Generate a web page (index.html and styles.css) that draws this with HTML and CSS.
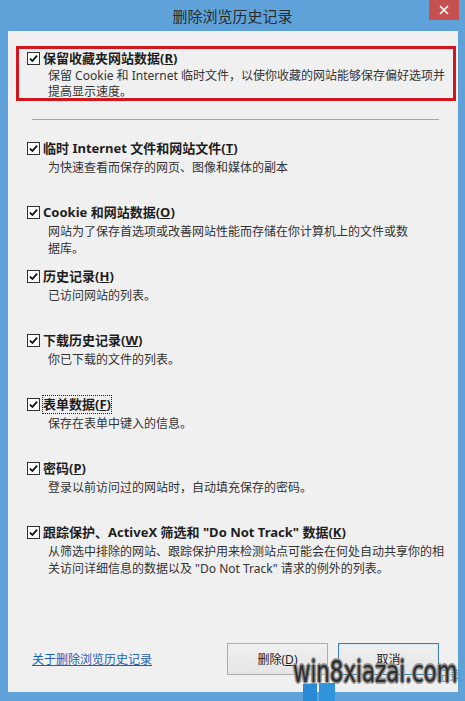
FILE: index.html
```html
<!DOCTYPE html>
<html lang="zh-CN">
<head>
    <meta charset="UTF-8">
    <meta name="viewport" content="width=device-width, initial-scale=1.0">
    <title>删除浏览历史记录</title>
    <link rel="stylesheet" href="styles.css">
</head>
<body>
    <div class="window">
        <div class="titlebar">
            <span></span>
            <h1 class="title">删除浏览历史记录</h1>
            <button class="close" aria-label="关闭">
                <svg width="10" height="10" viewBox="0 0 10 10"><path d="M1 1 L9 9 M9 1 L1 9" stroke="#fff" stroke-width="1.7" fill="none"/></svg>
            </button>
        </div>

        <div class="panel">
            <div class="option keep">
                <div class="option-head">
                    <span class="check"><svg viewBox="0 0 11 11"><path d="M2 5.6 L4.4 8 L9 2.6" /></svg></span>
                    <span class="option-title">保留收藏夹网站数据(<u>R</u>)</span>
                </div>
                <p class="option-desc">保留 Cookie 和 Internet 临时文件，以使你收藏的网站能够保存偏好选项并<br>提高显示速度。</p>
            </div>

            <hr class="divider">

            <div class="options">
                <div class="option">
                    <div class="option-head">
                        <span class="check"><svg viewBox="0 0 11 11"><path d="M2 5.6 L4.4 8 L9 2.6" /></svg></span>
                        <span class="option-title">临时 Internet 文件和网站文件(<u>T</u>)</span>
                    </div>
                    <p class="option-desc">为快速查看而保存的网页、图像和媒体的副本</p>
                </div>
                <div class="option">
                    <div class="option-head">
                        <span class="check"><svg viewBox="0 0 11 11"><path d="M2 5.6 L4.4 8 L9 2.6" /></svg></span>
                        <span class="option-title">Cookie 和网站数据(<u>O</u>)</span>
                    </div>
                    <p class="option-desc">网站为了保存首选项或改善网站性能而存储在你计算机上的文件或数<br>据库。</p>
                </div>
                <div class="option">
                    <div class="option-head">
                        <span class="check"><svg viewBox="0 0 11 11"><path d="M2 5.6 L4.4 8 L9 2.6" /></svg></span>
                        <span class="option-title">历史记录(<u>H</u>)</span>
                    </div>
                    <p class="option-desc">已访问网站的列表。</p>
                </div>
                <div class="option">
                    <div class="option-head">
                        <span class="check"><svg viewBox="0 0 11 11"><path d="M2 5.6 L4.4 8 L9 2.6" /></svg></span>
                        <span class="option-title">下载历史记录(<u>W</u>)</span>
                    </div>
                    <p class="option-desc">你已下载的文件的列表。</p>
                </div>
                <div class="option">
                    <div class="option-head">
                        <span class="check"><svg viewBox="0 0 11 11"><path d="M2 5.6 L4.4 8 L9 2.6" /></svg></span>
                        <span class="option-title focus">表单数据(<u>F</u>)</span>
                    </div>
                    <p class="option-desc">保存在表单中键入的信息。</p>
                </div>
                <div class="option">
                    <div class="option-head">
                        <span class="check"><svg viewBox="0 0 11 11"><path d="M2 5.6 L4.4 8 L9 2.6" /></svg></span>
                        <span class="option-title">密码(<u>P</u>)</span>
                    </div>
                    <p class="option-desc">登录以前访问过的网站时，自动填充保存的密码。</p>
                </div>
                <div class="option">
                    <div class="option-head">
                        <span class="check"><svg viewBox="0 0 11 11"><path d="M2 5.6 L4.4 8 L9 2.6" /></svg></span>
                        <span class="option-title">跟踪保护、ActiveX 筛选和 "Do Not Track" 数据(<u>K</u>)</span>
                    </div>
                    <p class="option-desc">从筛选中排除的网站、跟踪保护用来检测站点可能会在何处自动共享你的相<br>关访问详细信息的数据以及 "Do Not Track" 请求的例外的列表。</p>
                </div>
            </div>

            <div class="footer">
                <a href="#" class="about-link">关于删除浏览历史记录</a>
                <div class="buttons">
                    <button class="btn">删除(<u>D</u>)</button>
                    <button class="btn btn-default">取消</button>
                </div>
            </div>
        </div>

        <!-- site watermark stamped over the screenshot -->
        <div class="watermark">
            <svg class="wm-logo" width="34" height="18" viewBox="0 0 34 18">
                <polygon points="1,1 15,0 15,18 1,18" fill="#2b8ad6"/>
                <polygon points="17,0 33,-1 33,18 17,18" fill="#3195dd"/>
            </svg>
            <span class="wm-blue">记录</span>
            <span class="wm-text">win8xiazai.com</span>
        </div>
    </div>
</body>
</html>
```

FILE: styles.css
```css
:root {
    --frame: #5fa2da;
    --panel-bg: #f0f0f0;
    --text-color: #1e1e1e;
    --desc-color: #333;
    --link-color: #1f5fb5;
    --alert-red: #d3161e;
}

body {
    margin: 0;
    font-family: "Noto Sans", "Noto Sans CJK SC", sans-serif;
    background-color: var(--frame);
}

.window {
    width: 465px;
    height: 701px;
    display: flex;
    flex-direction: column;
    position: relative;
    background-color: var(--frame);
    overflow: hidden;
}

.titlebar {
    height: 31px;
    display: grid;
    grid-template-columns: 1fr auto 1fr;
}

.title {
    margin: 0;
    font-family: "Noto Sans CJK SC", sans-serif;
    font-size: 15px;
    font-weight: normal;
    line-height: 31px;
    color: #2a2a2a;
}

.close {
    justify-self: end;
    align-self: start;
    width: 30px;
    height: 20px;
    margin-right: 6px;
    padding: 0;
    border: none;
    background-color: #c75050;
    display: flex;
    align-items: center;
    justify-content: center;
}

.panel {
    flex: 1;
    margin: 0 7px 9px 8px;
    background-color: var(--panel-bg);
    display: flex;
    flex-direction: column;
}

.keep {
    margin: 15px 2px 0 8px;
    height: 55px;
    box-sizing: border-box;
    padding-left: 8px;
    border: 3px solid var(--alert-red);
}

.keep .option-desc {
    margin-top: 1px;
    line-height: 16px;
}

.divider {
    margin: 18px 19px 0 24px;
    height: 0;
    border: none;
    border-top: 1px solid #a6a6a6;
}

.options {
    margin-top: 19px;
    padding-left: 19px;
}

.options .option {
    height: 64px;
}

.option-head {
    display: flex;
    align-items: center;
    gap: 3px;
    height: 18px;
}

.check {
    width: 13px;
    height: 13px;
    box-sizing: border-box;
    border: 1px solid #333;
    background-color: #fff;
    display: flex;
}

.check svg {
    width: 11px;
    height: 11px;
}

.check path {
    fill: none;
    stroke: #111;
    stroke-width: 1.8;
}

.option-title {
    font-size: 13px;
    font-weight: bold;
    line-height: 17px;
    color: var(--text-color);
}

.option-title u {
    text-underline-offset: 1px;
}

.focus {
    outline: 1px dotted #222;
}

.option-desc {
    margin: 2px 0 0 21px;
    font-size: 12px;
    line-height: 17px;
    color: var(--desc-color);
    white-space: nowrap;
}

.footer {
    margin-top: auto;
    padding: 0 19px 17px 24px;
    display: flex;
    align-items: center;
    justify-content: space-between;
}

.about-link {
    font-size: 12px;
    color: var(--link-color);
    text-decoration: underline;
}

.buttons {
    display: flex;
    gap: 10px;
}

.btn {
    width: 101px;
    height: 32px;
    padding: 0;
    border: 1px solid #acacac;
    background: linear-gradient(#f0f0f0, #e5e5e5);
    font-family: "Noto Sans", "Noto Sans CJK SC", sans-serif;
    font-size: 12px;
    color: #222;
}

.btn-default {
    border-color: #3c7fb1;
    box-shadow: inset 0 0 0 1px #d6e7f5;
}

.watermark {
    position: absolute;
    left: 292px;
    top: 657px;
    width: 173px;
    height: 44px;
}

.wm-logo {
    position: absolute;
    left: 10px;
    top: 26px;
}

.wm-blue {
    position: absolute;
    left: 144px;
    top: 10px;
    font-family: "Noto Sans CJK SC", sans-serif;
    font-size: 13px;
    line-height: 16px;
    color: #4a98d6;
}

.wm-text {
    position: absolute;
    left: 1px;
    top: 0;
    font-family: "DejaVu Sans", sans-serif;
    font-size: 30px;
    line-height: 30px;
    color: #2e2e2e;
    white-space: nowrap;
    transform: scaleX(0.71);
    transform-origin: left top;
    text-shadow: 1px 1px 0 #8e8e8e, -1px -1px 0 #8e8e8e, 1px -1px 0 #8e8e8e, -1px 1px 0 #8e8e8e,
        2px 0 0 #9a9a9a, -2px 0 0 #9a9a9a, 0 2px 0 #9a9a9a, 0 -2px 0 #9a9a9a;
}
```
